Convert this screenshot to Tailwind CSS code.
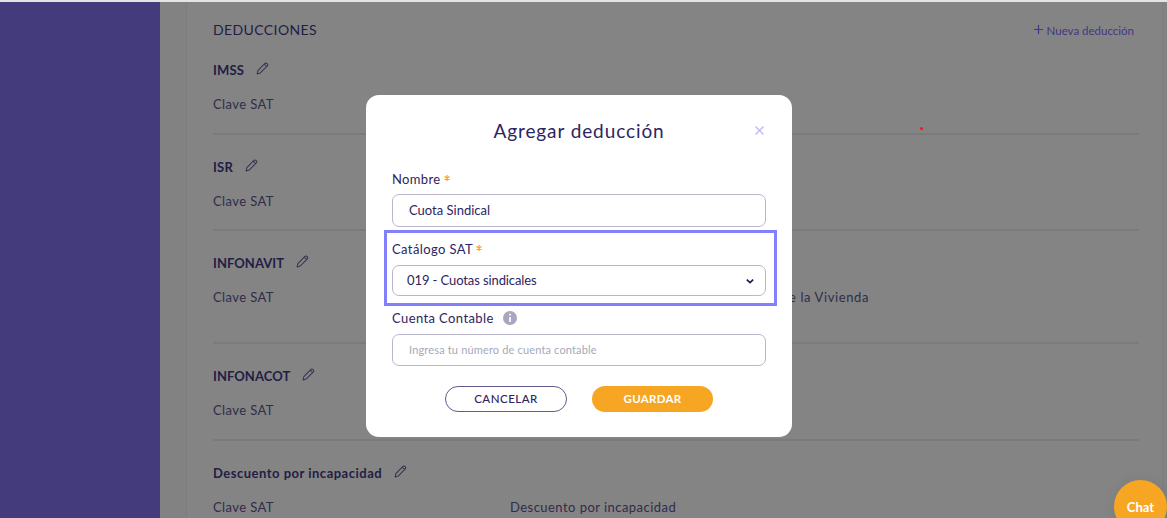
<!DOCTYPE html>
<html lang="es" class="h-full">

<head>
  <meta charset="UTF-8" />
  <meta name="viewport" content="width=device-width, initial-scale=1.0" />
  <script src="https://cdn.jsdelivr.net/npm/@tailwindcss/browser@4"></script>
  <title>Deducciones</title>
</head>

<body class="h-screen overflow-hidden bg-[#828282] font-['Lato',sans-serif] text-[#221d44] text-[13px] leading-4">

  <!-- shared pencil icon -->
  <svg class="hidden">
    <symbol id="pencil" viewBox="0 0 14 14">
      <path d="M1.2 12.8 L2 9.2 L9.6 1.6 Q10.8 .6 12 1.7 Q13.2 2.9 12.2 4.2 L4.7 11.8 Z M8.8 2.4 L11.5 5" fill="none" stroke="#37334f" stroke-width="1.1" stroke-linejoin="round" />
    </symbol>
  </svg>

  <div class="flex h-full border-t-2 border-[#e2e4e6]">

    <!-- Sidebar -->
    <aside class="w-40 shrink-0 bg-[#433b7b]"></aside>

    <!-- Deductions list -->
    <main class="ml-[26px] mr-1 flex-1 border-x border-[#7d7d7d] bg-[#848484] pl-[26px] pr-[23px]">
      <header class="flex h-9 items-start justify-between pt-5 pr-[5px]">
        <h2 class="text-[14px] leading-4 tracking-[0.4px]">DEDUCCIONES</h2>
        <button class="flex items-center gap-1 text-[#433785]">
          <svg class="-mt-[3px] size-[9px]" viewBox="0 0 9 9"><path d="M4.5 0V9M0 4.5H9" stroke="currentColor" stroke-width="1.2" /></svg>
          <span class="mt-px text-[11.5px] leading-4">Nueva deducción</span>
        </button>
      </header>

      <section class="h-[97px] border-b-2 border-[#7b7b7b] pt-6">
        <h3 class="flex items-center gap-3 font-bold tracking-[0.2px]">IMSS <svg class="-mt-[3px] size-[13px]"><use href="#pencil" /></svg></h3>
        <p class="mt-[18px] tracking-[0.4px] text-[#302c4a]">Clave SAT</p>
      </section>
      <section class="h-[96px] border-b-2 border-[#7b7b7b] pt-6">
        <h3 class="flex items-center gap-3 font-bold tracking-[0.2px]">ISR <svg class="-mt-[3px] size-[13px]"><use href="#pencil" /></svg></h3>
        <p class="mt-[18px] tracking-[0.4px] text-[#302c4a]">Clave SAT</p>
      </section>
      <section class="h-[113px] border-b-2 border-[#7b7b7b] pt-6">
        <h3 class="flex items-center gap-3 font-bold tracking-[0.05px]">INFONAVIT <svg class="-mt-[3px] size-[13px]"><use href="#pencil" /></svg></h3>
        <div class="mt-[18px] flex justify-between pr-[270px] tracking-[0.4px] text-[#302c4a]">
          <p>Clave SAT</p>
          <p class="tracking-[0.6px]">de la Vivienda</p>
        </div>
      </section>
      <section class="h-[97px] border-b-2 border-[#7b7b7b] pt-6">
        <h3 class="flex items-center gap-3 font-bold tracking-[0.05px]">INFONACOT <svg class="-mt-[3px] size-[13px]"><use href="#pencil" /></svg></h3>
        <p class="mt-[18px] tracking-[0.4px] text-[#302c4a]">Clave SAT</p>
      </section>
      <section class="pt-6">
        <h3 class="flex items-center gap-3 font-bold tracking-[0.5px]">Descuento por incapacidad <svg class="-mt-[3px] size-[13px]"><use href="#pencil" /></svg></h3>
        <div class="mt-[18px] flex tracking-[0.4px] text-[#302c4a]">
          <p class="w-[297px]">Clave SAT</p>
          <p class="tracking-[0.46px]">Descuento por incapacidad</p>
        </div>
      </section>
    </main>
  </div>

  <!-- Modal -->
  <div class="absolute left-[366px] top-[95px] h-[342px] w-[426px] rounded-[13px] bg-white px-[26px] pt-6 text-[#2d2461]">
    <div class="relative text-center">
      <h1 class="text-[19px] leading-6 tracking-[0.9px]">Agregar deducción</h1>
      <button class="absolute right-[2px] top-[7px] text-[#c0b6fa]">
        <svg class="size-[9px]" viewBox="0 0 9 9"><path d="M.5 .5L8.5 8.5M8.5 .5L.5 8.5" stroke="currentColor" stroke-width="1.4" /></svg>
      </button>
    </div>

    <label class="mt-7 flex items-center gap-[3px] tracking-[0.35px]">Nombre
      <svg class="-mt-[2px] size-[6px] text-[#f6a623]" viewBox="0 0 6 6"><path d="M3 0V6M.4 1.5L5.6 4.5M5.6 1.5L.4 4.5" stroke="currentColor" stroke-width="1.2" /></svg>
    </label>
    <div class="mt-[7px] flex h-[33px] items-center rounded-[7px] border border-[#bab7cb] px-4 pb-px">Cuota Sindical</div>

    <!-- highlighted field -->
    <div class="-ml-2 mt-[3px] h-[76px] w-[393px] border-[3px] border-[#8280fb] px-[5px] pt-[8px]">
      <label class="flex items-center gap-[3px] tracking-[0.4px]">Catálogo SAT
        <svg class="-mt-[2px] size-[6px] text-[#f6a623]" viewBox="0 0 6 6"><path d="M3 0V6M.4 1.5L5.6 4.5M5.6 1.5L.4 4.5" stroke="currentColor" stroke-width="1.2" /></svg>
      </label>
      <div class="mt-2 flex h-[31px] w-[374px] items-center justify-between rounded-[7px] border border-[#bab7cb] pl-[14px] pr-[11px]">
        <span class="-mt-[2px] tracking-[-0.1px]">019 - Cuotas sindicales</span>
        <svg class="size-2" viewBox="0 0 8 8"><path d="M.8 2.6L4 5.6L7.2 2.6" fill="none" stroke="#241858" stroke-width="1.7" /></svg>
      </div>
    </div>

    <label class="mt-[4px] flex items-center gap-[9px] tracking-[0.4px]">Cuenta Contable
      <svg class="-mt-px size-[14px]" viewBox="0 0 14 14"><circle cx="7" cy="7" r="7" fill="#aaa6bf" /><path d="M7 2.8V4.6M7 6V11" stroke="#fff" stroke-width="1.7" /></svg>
    </label>
    <div class="mt-2 flex h-8 items-center rounded-[7px] border border-[#bab7cb] px-4 text-[11px] tracking-[0.16px] text-[#a5a9ba]">Ingresa tu número de cuenta contable</div>

    <div class="mt-5 flex justify-center gap-[25px] text-[11.5px]">
      <button class="h-[26px] w-[122px] rounded-full border border-[#625b8b] pb-px font-medium tracking-[0.5px]">CANCELAR</button>
      <button class="h-[26px] w-[121px] rounded-full bg-[#f6a623] pb-px font-bold tracking-[0.3px] text-white">GUARDAR</button>
    </div>
  </div>

  <!-- cursor dot -->
  <span class="absolute left-[920px] top-[127px] size-[3px] rounded-full bg-[#f51818]"></span>

  <!-- Chat bubble -->
  <button class="absolute left-[1114px] top-[480px] size-[53px] rounded-full bg-[#f6a623] font-bold text-white shadow-[0_0_14px_rgba(0,0,0,0.06)]">Chat</button>

</body>

</html>
